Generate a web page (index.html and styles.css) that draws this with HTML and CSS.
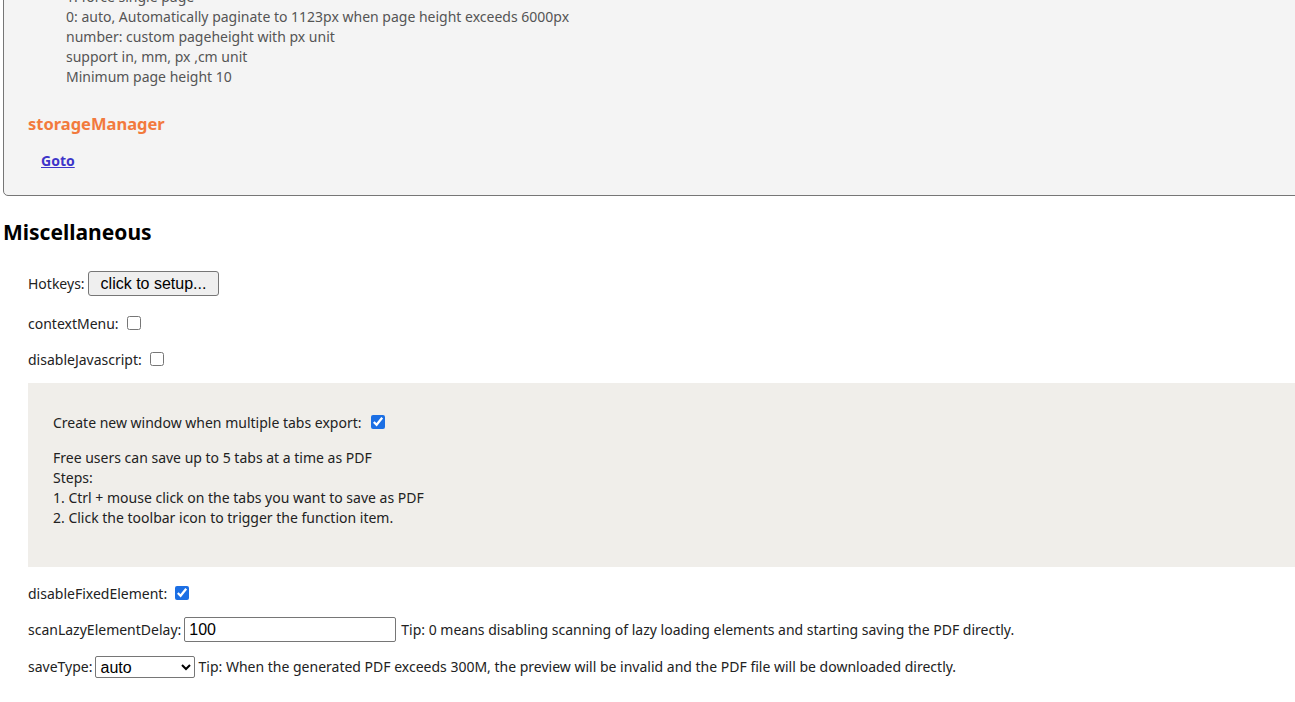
FILE: index.html
```html
<!DOCTYPE html>
<html lang="en">
<head>
    <meta charset="UTF-8">
    <meta name="viewport" content="width=device-width, initial-scale=1.0">
    <title>Options</title>
    <link rel="stylesheet" href="styles.css">
</head>
<body>
    <div class="page">
        <div class="group">
            <div class="notes">
                1: force single page<br>
                0: auto, Automatically paginate to 1123px when page height exceeds 6000px<br>
                number: custom pageheight with px unit<br>
                support in, mm, px ,cm unit<br>
                Minimum page height 10
            </div>
            <div class="group-title">storageManager</div>
            <div class="group-link"><a href="#">Goto</a></div>
        </div>

        <h2 class="section-title">Miscellaneous</h2>

        <div class="row row-hotkeys">
            <span>Hotkeys:</span>
            <button type="button" class="setup-btn">click to setup...</button>
        </div>

        <div class="row row-check">
            <span>contextMenu:</span>
            <input type="checkbox" id="contextMenu">
        </div>

        <div class="row row-check">
            <span>disableJavascript:</span>
            <input type="checkbox" id="disableJavascript">
        </div>

        <div class="tabs-box">
            <div class="row-inner">
                <span>Create new window when multiple tabs export:</span>
                <input type="checkbox" id="newWindow" checked>
            </div>
            <div class="tabs-help">
                Free users can save up to 5 tabs at a time as PDF<br>
                Steps:<br>
                1. Ctrl + mouse click on the tabs you want to save as PDF<br>
                2. Click the toolbar icon to trigger the function item.
            </div>
        </div>

        <div class="row row-fixed">
            <span>disableFixedElement:</span>
            <input type="checkbox" id="disableFixedElement" checked>
        </div>

        <div class="row row-delay">
            <span>scanLazyElementDelay:</span>
            <input type="text" class="delay-input" value="100">
            <span class="tip">Tip: 0 means disabling scanning of lazy loading elements and starting saving the PDF directly.</span>
        </div>

        <div class="row row-save">
            <span>saveType:</span>
            <select class="save-select">
                <option>auto</option>
                <option>preview</option>
                <option>download</option>
            </select>
            <span class="tip">Tip: When the generated PDF exceeds 300M, the preview will be invalid and the PDF file will be downloaded directly.</span>
        </div>
    </div>
</body>
</html>
```

FILE: styles.css
```css
body {
    margin: 0;
    background: #fff;
    font-family: "Noto Sans", sans-serif;
    font-size: 14px;
    line-height: 20px;
    color: #222;
    overflow: hidden;
}

.page {
    margin-top: -14px;
}

.group {
    margin: 0 -20px 0 3px;
    border: 1px solid #767676;
    border-radius: 5px;
    background: #f4f4f4;
    padding-bottom: 24px;
}

.notes {
    margin-left: 62px;
    color: #555;
}

.group-title {
    margin: 27px 0 0 24px;
    color: #f27a3d;
    font-size: 16.5px;
    font-weight: bold;
}

.group-link {
    margin: 17px 0 0 37px;
}

.group-link a {
    color: #3d35c9;
    font-weight: bold;
}

.section-title {
    margin: 22px 0 0 3px;
    font-size: 21px;
    line-height: 28px;
    color: #000;
}

.row {
    display: flex;
    align-items: center;
    gap: 3px;
    margin-left: 28px;
    white-space: nowrap;
}

.row input[type="checkbox"],
.row-inner input[type="checkbox"] {
    width: 14px;
    height: 14px;
    margin: 0 0 2px 5px;
    accent-color: #1c6fe4;
}

.row-hotkeys {
    margin-top: 25px;
}

.setup-btn {
    font-family: "Liberation Sans", Arial, sans-serif;
    font-size: 16px;
    height: 25px;
    padding: 0 12px;
    border: 1px solid #767676;
    border-radius: 3px;
    background: #efefef;
    color: #000;
}

.row-check {
    margin-top: 18px;
}

.row-check + .row-check {
    margin-top: 16px;
}

.tabs-box {
    margin: 13px -20px 0 28px;
    background: #f0eeea;
    padding: 30px 0 39px 25px;
}

.row-inner {
    display: flex;
    align-items: center;
    gap: 4px;
}

.tabs-help {
    margin-top: 15px;
}

.row-fixed {
    margin-top: 17px;
}

.row-delay {
    margin-top: 13px;
}

.delay-input {
    width: 212px;
    height: 25px;
    box-sizing: border-box;
    border: 1px solid #767676;
    border-radius: 2px;
    padding: 0 4px;
    font-family: "Liberation Sans", Arial, sans-serif;
    font-size: 16px;
    margin-right: 2px;
}

.row-save {
    margin-top: 14px;
}

.save-select {
    width: 100px;
    height: 22px;
    border: 1px solid #767676;
    border-radius: 2px;
    font-family: "Liberation Sans", Arial, sans-serif;
    font-size: 16px;
    background: #fff;
    color: #000;
}
```
